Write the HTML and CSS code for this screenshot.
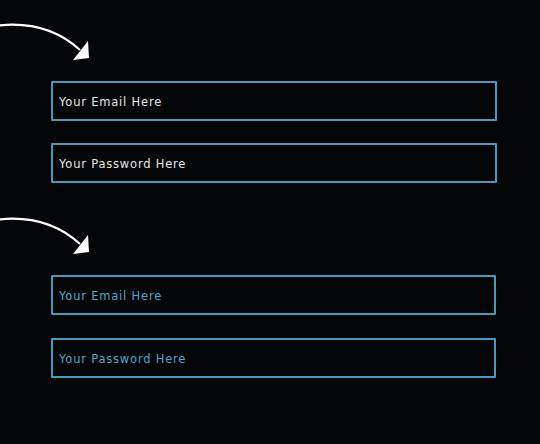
FILE: index.html
```html
<!DOCTYPE html>
<html lang="en">
<head>
    <meta charset="UTF-8">
    <meta name="viewport" content="width=device-width, initial-scale=1.0">
    <title>Input Styles</title>
    <link rel="stylesheet" href="styles.css">
</head>
<body>
    <div class="group">
        <svg class="arrow" width="100" height="62" viewBox="0 0 100 62">
            <path d="M-2 25.5 C 30 22, 58 30, 80 50" fill="none" stroke="#fff" stroke-width="2.2"/>
            <polygon points="88,41 73,60 89,58" fill="#fff"/>
        </svg>
        <input class="field" type="text" placeholder="Your Email Here">
        <input class="field" type="password" placeholder="Your Password Here">
    </div>

    <div class="group blue">
        <svg class="arrow" width="100" height="62" viewBox="0 0 100 62">
            <path d="M-2 25.5 C 30 22, 58 30, 80 50" fill="none" stroke="#fff" stroke-width="2.2"/>
            <polygon points="88,41 73,60 89,58" fill="#fff"/>
        </svg>
        <input class="field" type="text" placeholder="Your Email Here">
        <input class="field" type="password" placeholder="Your Password Here">
    </div>
</body>
</html>
```

FILE: styles.css
```css
body {
    margin: 0;
    background-color: #050608;
    font-family: "DejaVu Sans", Verdana, sans-serif;
}
.group {
    display: flex;
    flex-direction: column;
    gap: 22px;
    margin-bottom: 11px;
}
.arrow {
    display: block;
    margin-bottom: -3px;
}
.field {
    box-sizing: border-box;
    width: 446px;
    height: 40px;
    margin: 0 0 0 51px;
    padding: 1px 6px 0;
    background: transparent;
    border: 2px solid #4b98ba;
    border-radius: 1px;
    outline: none;
    font-family: inherit;
    font-size: 11.5px;
    letter-spacing: 0.8px;
    color: #e8e8e8;
}
.field::placeholder {
    color: #e6e6e6;
    opacity: 1;
}
.blue .field {
    width: 445px;
    color: #4fa7cf;
}
.blue .field:last-child {
    margin-top: 1px;
}
.blue .field::placeholder {
    color: #4fa7cf;
}
```
